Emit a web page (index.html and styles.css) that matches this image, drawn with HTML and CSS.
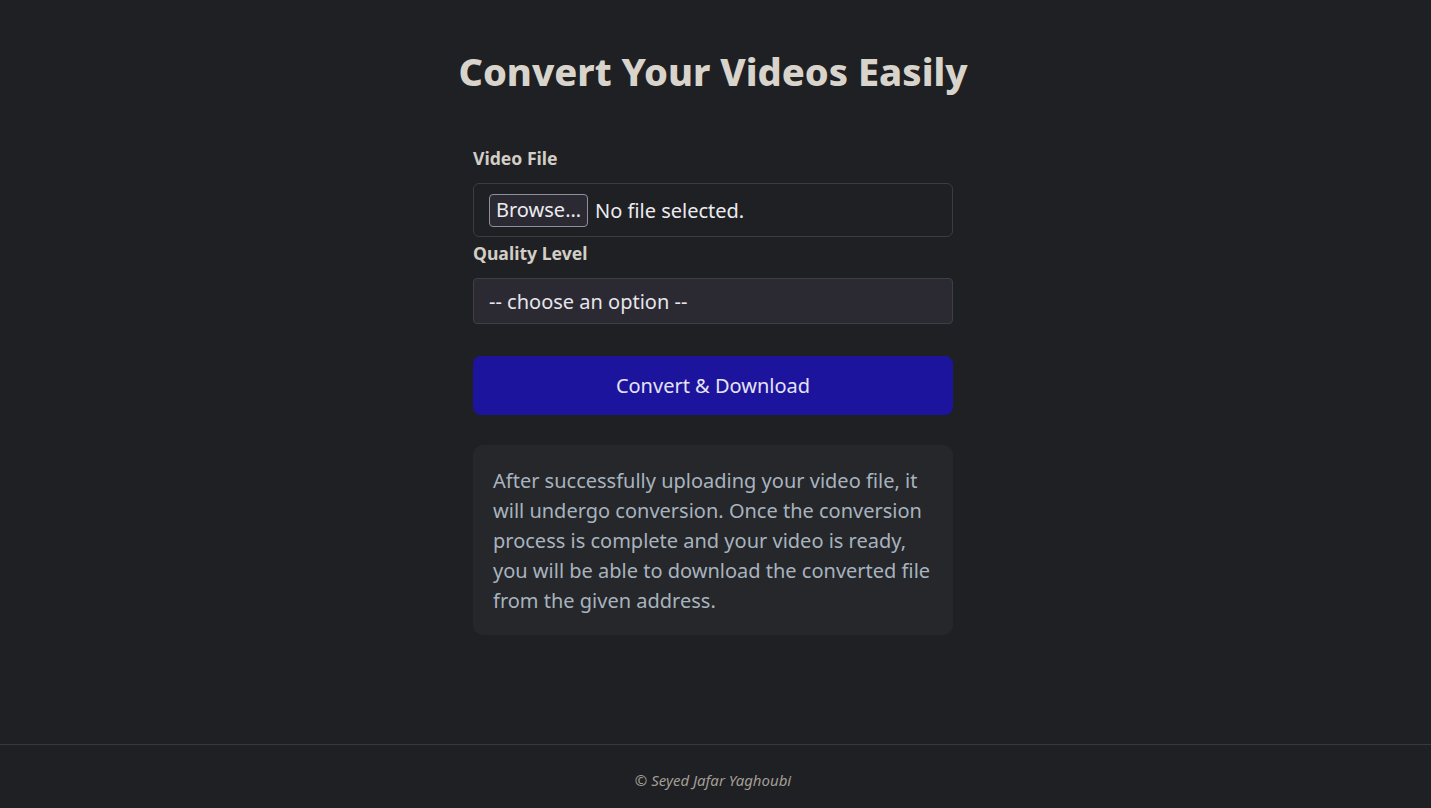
FILE: index.html
```html
<!DOCTYPE html>
<html lang="en">
<head>
<meta charset="utf-8">
<title>Convert Your Videos Easily</title>
<link rel="stylesheet" href="styles.css">
</head>
<body>
<main class="page">
  <h1 class="title">Convert Your Videos Easily</h1>
  <form class="form">
    <label class="label">Video File</label>
    <div class="file-box">
      <span class="browse">Browse…</span>
      <span class="file-text">No file selected.</span>
    </div>
    <label class="label">Quality Level</label>
    <div class="select">-- choose an option --</div>
    <button type="button" class="submit">Convert &amp; Download</button>
    <div class="info">After successfully uploading your video file, it will undergo conversion. Once the conversion process is complete and your video is ready, you will be able to download the converted file from the given address.</div>
  </form>
</main>
<footer class="footer">© Seyed Jafar Yaghoubi</footer>
</body>
</html>
```
FILE: styles.css
```css
html, body {
  margin: 0;
  padding: 0;
}
body {
  background: #1f2023;
  font-family: "Noto Sans", "Open Sans", sans-serif;
  color: #d6d2ca;
  min-height: 100vh;
  display: flex;
  flex-direction: column;
}
.page {
  display: flex;
  flex-direction: column;
  align-items: center;
  padding-top: 47px;
  padding-right: 5px;
}
.title {
  margin: 0;
  font-size: 38px;
  line-height: 48px;
  font-weight: 800;
  color: #d8d4cc;
}
.form {
  width: 480px;
  margin-top: 51px;
  display: flex;
  flex-direction: column;
}
.label {
  font-size: 17.6px;
  line-height: 24px;
  font-weight: 700;
  color: #d2cec6;
  margin-bottom: 13px;
}
.file-box {
  height: 54px;
  box-sizing: border-box;
  border: 1px solid #3b3c3f;
  border-radius: 6px;
  display: flex;
  align-items: center;
  padding-left: 15px;
  gap: 7px;
  font-size: 20px;
  color: #ecebf0;
  margin-bottom: 4px;
}
.browse {
  height: 33px;
  box-sizing: border-box;
  border: 1px solid #8f8f9d;
  border-radius: 4px;
  background: #2b2a33;
  padding: 0 6px;
  display: flex;
  align-items: center;
  line-height: 1;
}
.select {
  height: 46px;
  box-sizing: border-box;
  background: #2b2a33;
  border: 1px solid #3e3e44;
  border-radius: 4px;
  display: flex;
  align-items: center;
  padding-left: 15px;
  font-size: 20px;
  color: #e6e5ec;
}
.submit {
  margin-top: 32px;
  height: 59px;
  border: none;
  border-radius: 8px;
  background: #1d149e;
  color: #e4e3f2;
  font-family: inherit;
  font-size: 20px;
}
.info {
  margin-top: 30px;
  background: #25272a;
  border-radius: 10px;
  padding: 21px 20px 19px;
  font-size: 20px;
  line-height: 30px;
  color: #a8b3bf;
}
.footer {
  margin-top: auto;
  border-top: 1px solid #38393c;
  text-align: center;
  padding: 24px 5px 17px 0;
  font-size: 15px;
  line-height: 22px;
  font-style: italic;
  color: #a29e96;
}
```
